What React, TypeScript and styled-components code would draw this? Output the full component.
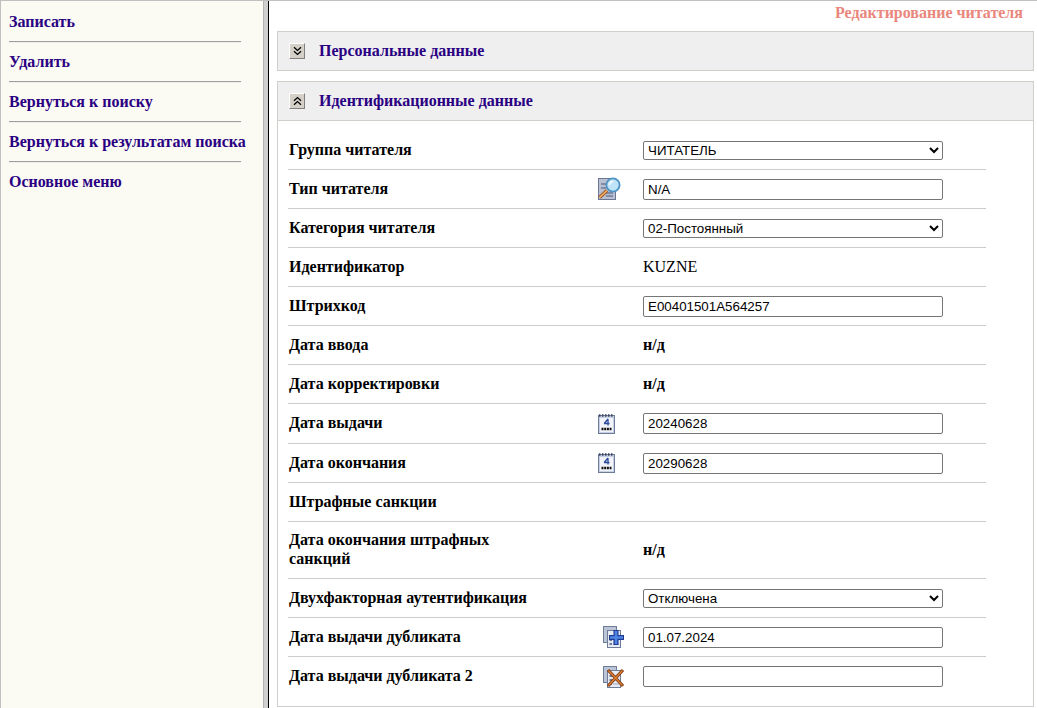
import React from 'react';
import styled, { createGlobalStyle } from 'styled-components';

const GlobalStyle = createGlobalStyle`
  html, body {
    margin: 0;
    padding: 0;
    background: #fff;
  }
  * {
    box-sizing: border-box;
  }
`;

const Page = styled.div`
  display: flex;
  width: 1037px;
  height: 708px;
  overflow: hidden;
  border-top: 1px solid #c0c0c0;
  border-left: 1px solid #c0c0c0;
  font-family: 'Liberation Serif', 'Times New Roman', serif;
  font-size: 16px;
  font-weight: bold;
`;

const Sidebar = styled.nav`
  width: 262px;
  flex-shrink: 0;
  padding: 11px 0 0 8px;
  background: #fbfaf3;
`;

const MenuLink = styled.a`
  display: block;
  height: 19px;
  line-height: 19px;
  color: #2a0082;
  white-space: nowrap;
  cursor: pointer;
`;

const MenuRule = styled.hr`
  width: 232px;
  height: 2px;
  margin: 10px 0 9px;
  border: 0;
  border-top: 1px solid #a09e9e;
  border-bottom: 1px solid #eeeeea;
`;

const Splitter = styled.div`
  width: 6px;
  flex-shrink: 0;
  background: #d0d0d0;
  border-left: 1px solid #b4b4b4;
  border-right: 1px solid #000;
`;

const Main = styled.main`
  flex: 1;
  min-width: 0;
  padding: 0 3px 0 8px;
`;

const PageTitle = styled.div`
  height: 30px;
  padding: 4px 11px 0 0;
  line-height: 16px;
  text-align: right;
  color: #e9877c;
`;

const Panel = styled.section`
  margin-bottom: 10px;
  border: 1px solid #d2cfca;
`;

const PanelHeader = styled.header<{ $open?: boolean }>`
  display: flex;
  align-items: center;
  height: ${p => (p.$open ? 39 : 38)}px;
  padding-left: 11px;
  background: #efefef;
  border-bottom: ${p => (p.$open ? '1px solid #d2cfca' : '0')};
  color: #2a0082;
`;

const Toggle = styled.button`
  display: flex;
  align-items: center;
  justify-content: center;
  width: 16px;
  height: 16px;
  margin-right: 14px;
  padding: 0;
  background: #d4d0c8;
  border: 1px solid;
  border-color: #fff #808080 #808080 #fff;
`;

const PanelBody = styled.div`
  padding: 10px 47px 10px 10px;
`;

const Row = styled.div<{ $height?: number; $last?: boolean }>`
  display: grid;
  grid-template-columns: 300px 55px 1fr;
  align-items: center;
  height: ${p => p.$height ?? 39}px;
  border-bottom: ${p => (p.$last ? '0' : '1px solid #cccccc')};
`;

const Label = styled.label`
  display: block;
  width: 250px;
  padding: 0 0 2px 1px;
  line-height: 19px;
  color: #000;
`;

const IconCell = styled.div<{ $inset?: number }>`
  display: flex;
  padding-left: ${p => p.$inset ?? 9}px;
`;

const TextField = styled.input`
  display: block;
  width: 300px;
  height: 21px;
  padding: 1px 4px;
  background: #fff;
  border: 1px solid #767676;
  border-radius: 2px;
  font-family: 'Liberation Sans', Arial, sans-serif;
  font-size: 13.33px;
  color: #000;
`;

const SelectField = styled.select`
  display: block;
  width: 300px;
  height: 19px;
  background: #fff;
  border: 1px solid #767676;
  border-radius: 2px;
  font-family: 'Liberation Sans', Arial, sans-serif;
  font-size: 13.33px;
  color: #000;
`;

const Value = styled.span<{ $plain?: boolean }>`
  font-weight: ${p => (p.$plain ? 'normal' : 'bold')};
  color: #000;
`;

const ChevronDown = () => (
  <svg width="9" height="10" viewBox="0 0 9 10" fill="none" stroke="#000" strokeWidth="1.3">
    <path d="M1 1.2 4.5 4.4 8 1.2M1 5.2 4.5 8.4 8 5.2" />
  </svg>
);

const ChevronUp = () => (
  <svg width="9" height="10" viewBox="0 0 9 10" fill="none" stroke="#000" strokeWidth="1.3">
    <path d="M1 4.8 4.5 1.6 8 4.8M1 8.8 4.5 5.6 8 8.8" />
  </svg>
);

const SearchIcon = () => (
  <svg width="25" height="24" viewBox="0 0 25 24">
    <rect x="1.5" y="1.5" width="17" height="21" fill="#b9c0d2" stroke="#6c7796" />
    <path d="M4 7h7M4 11h5M9 16h7M9 19h7" stroke="#6f7a98" strokeWidth="1.3" />
    <path d="M2.5 20.5 10 13.5" stroke="#9c5a2c" strokeWidth="3.6" />
    <path d="M2.5 20.5 10 13.5" stroke="#f6b26a" strokeWidth="1.6" />
    <circle cx="16" cy="8" r="6.6" fill="#bfe3f7" stroke="#4f93c4" strokeWidth="1.8" />
    <path d="M12.5 8a3.6 3.6 0 0 1 3.6-3.6" fill="none" stroke="#fff" strokeWidth="1.5" />
  </svg>
);

const CalendarIcon = () => (
  <svg width="20" height="22" viewBox="0 0 20 22">
    <rect x="1.5" y="2.5" width="16" height="18" fill="#c6d0e4" stroke="#6f7c98" />
    <path d="M2 2.5h15" stroke="#3d4660" strokeDasharray="1.5 1.5" strokeWidth="2.4" />
    <rect x="3" y="5" width="13" height="14" fill="#f2f4f9" />
    <path d="M11 6v6.5M7 10.5h5.5M7.2 10.5 11 6" fill="none" stroke="#2a4a9a" strokeWidth="1.3" />
    <path d="M4.5 16h10" stroke="#111" strokeWidth="2.4" strokeDasharray="2 0.7" />
  </svg>
);

const Pages = () => (
  <>
    <rect x="0.5" y="0.5" width="13" height="16" fill="#bcc5d8" stroke="#6f7c98" />
    <rect x="4.5" y="4.5" width="13" height="17" fill="#e6eaf3" stroke="#6f7c98" />
    <path d="M6.5 10h2.5M6.5 14h2.5M6.5 18h2.5" stroke="#6f7c98" strokeWidth="1.8" />
    <path d="M10 10h6M10 14h6M10 18h6" stroke="#9aa5bf" />
  </>
);

const AddCopyIcon = () => (
  <svg width="22" height="22" viewBox="0 0 22 22">
    <Pages />
    <path d="M13 4v15M6 11.5h15" stroke="#1f3a92" strokeWidth="5" />
    <path d="M13 5v13M7 11.5h13" stroke="#4f86e6" strokeWidth="2.6" />
  </svg>
);

const RemoveCopyIcon = () => (
  <svg width="22" height="22" viewBox="0 0 22 22">
    <Pages />
    <path d="M5 4 20 20M20 4 5 20" stroke="#84390f" strokeWidth="3.2" />
    <path d="M5.5 4.5 19.5 19.5M19.5 4.5 5.5 19.5" stroke="#e08438" strokeWidth="1.2" />
  </svg>
);

const menuItems = [
  'Записать',
  'Удалить',
  'Вернуться к поиску',
  'Вернуться к результатам поиска',
  'Основное меню',
];

const App: React.FC = () => (
  <>
    <GlobalStyle />
    <Page>
      <Sidebar>
        {menuItems.map((item, i) => (
          <React.Fragment key={item}>
            {i > 0 && <MenuRule />}
            <MenuLink>{item}</MenuLink>
          </React.Fragment>
        ))}
      </Sidebar>
      <Splitter />
      <Main>
        <PageTitle>Редактирование читателя</PageTitle>
        <Panel>
          <PanelHeader>
            <Toggle>
              <ChevronDown />
            </Toggle>
            Персональные данные
          </PanelHeader>
        </Panel>
        <Panel>
          <PanelHeader $open>
            <Toggle>
              <ChevronUp />
            </Toggle>
            Идентификационные данные
          </PanelHeader>
          <PanelBody>
            <Row>
              <Label>Группа читателя</Label>
              <IconCell />
              <SelectField defaultValue="reader">
                <option value="reader">ЧИТАТЕЛЬ</option>
              </SelectField>
            </Row>
            <Row>
              <Label>Тип читателя</Label>
              <IconCell>
                <SearchIcon />
              </IconCell>
              <TextField defaultValue="N/A" />
            </Row>
            <Row>
              <Label>Категория читателя</Label>
              <IconCell />
              <SelectField defaultValue="02">
                <option value="02">02-Постоянный</option>
              </SelectField>
            </Row>
            <Row>
              <Label>Идентификатор</Label>
              <IconCell />
              <Value $plain>KUZNE</Value>
            </Row>
            <Row>
              <Label>Штрихкод</Label>
              <IconCell />
              <TextField defaultValue="E00401501A564257" />
            </Row>
            <Row>
              <Label>Дата ввода</Label>
              <IconCell />
              <Value>н/д</Value>
            </Row>
            <Row>
              <Label>Дата корректировки</Label>
              <IconCell />
              <Value>н/д</Value>
            </Row>
            <Row $height={40}>
              <Label>Дата выдачи</Label>
              <IconCell>
                <CalendarIcon />
              </IconCell>
              <TextField defaultValue="20240628" />
            </Row>
            <Row>
              <Label>Дата окончания</Label>
              <IconCell>
                <CalendarIcon />
              </IconCell>
              <TextField defaultValue="20290628" />
            </Row>
            <Row>
              <Label>Штрафные санкции</Label>
              <IconCell />
              <span />
            </Row>
            <Row $height={57}>
              <Label>Дата окончания штрафных санкций</Label>
              <IconCell />
              <Value>н/д</Value>
            </Row>
            <Row>
              <Label>Двухфакторная аутентификация</Label>
              <IconCell />
              <SelectField defaultValue="off">
                <option value="off">Отключена</option>
              </SelectField>
            </Row>
            <Row>
              <Label>Дата выдачи дубликата</Label>
              <IconCell $inset={15}>
                <AddCopyIcon />
              </IconCell>
              <TextField defaultValue="01.07.2024" />
            </Row>
            <Row $last>
              <Label>Дата выдачи дубликата 2</Label>
              <IconCell $inset={15}>
                <RemoveCopyIcon />
              </IconCell>
              <TextField defaultValue="" />
            </Row>
          </PanelBody>
        </Panel>
      </Main>
    </Page>
  </>
);

export default App;
